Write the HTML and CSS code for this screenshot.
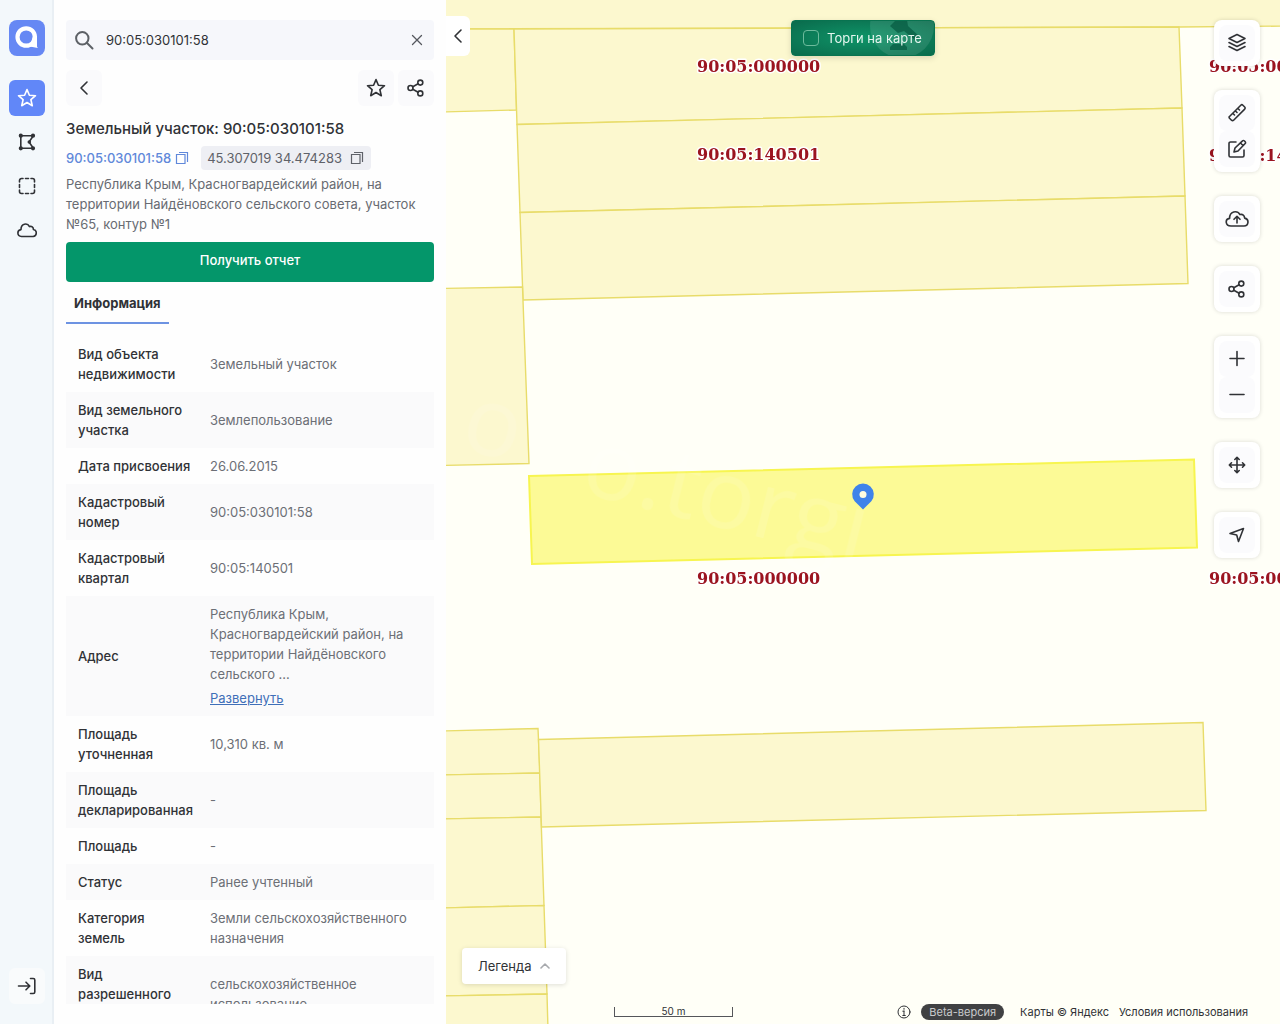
FILE: index.html
```html
<!DOCTYPE html>
<html lang="ru">
<head>
<meta charset="utf-8">
<meta name="viewport" content="width=device-width, initial-scale=1">
<title>Земельный участок: 90:05:030101:58</title>
<link rel="stylesheet" href="styles.css">
</head>
<body>
<svg class="sprite" aria-hidden="true">
  <symbol id="i-star" viewBox="0 0 20 20"><path d="M10 1.600l2.400 5.600 6.100.5-4.600 4 1.400 6L10 14.500l-5.300 3.200 1.400-6-4.600-4 6.100-.5z"/></symbol>
  <symbol id="i-share" viewBox="0 0 20 20"><circle cx="4.500" cy="10" r="2.500"/><circle cx="14.300" cy="4.600" r="2.500"/><circle cx="14.300" cy="15.400" r="2.500"/><path d="M6.800 8.800l5.300-3M6.800 11.200l5.300 3"/></symbol>
  <symbol id="i-back" viewBox="0 0 20 20"><path d="M13 4l-6 6 6 6"/></symbol>
  <symbol id="i-copy" viewBox="0 0 14 14"><path d="M1.500 3.500h8.500v9H1.500zM4 1.500h8.500V11"/></symbol>
</svg>
<div class="app">
  <nav class="rail" aria-label="Разделы">
    <a class="logo" href="#" aria-label="Главная">
      <svg viewBox="0 0 36 36"><circle cx="17.200" cy="17" r="8.700" fill="none" stroke="#fff" stroke-width="4.200"/><path d="M24 16h4v10.500l.8 1.500-8-1.500z" fill="#fff"/></svg>
    </a>
    <button class="tile tile-active" aria-label="Избранное"><svg class="icon"><use href="#i-star"/></svg></button>
    <button class="tile" aria-label="Полигон">
      <svg class="icon" viewBox="0 0 20 20"><path d="M5 3.700h9.500M3.800 5v10M5 16.300h9.500M15.500 5l-3.500 5 3.500 5"/><g fill="currentColor"><circle cx="3.800" cy="3.700" r="1.300"/><circle cx="16" cy="3.700" r="1.300"/><circle cx="12.300" cy="10" r="1"/><circle cx="3.800" cy="16.300" r="1.300"/><circle cx="16" cy="16.300" r="1.300"/></g></svg>
    </button>
    <button class="tile" aria-label="Выделение">
      <svg class="icon" viewBox="0 0 20 20"><path d="M2.500 6V4.500a2 2 0 0 1 2-2H6M8.500 2.500h3M14 2.500h1.500a2 2 0 0 1 2 2V6M17.500 8.500v3M17.500 14v1.500a2 2 0 0 1-2 2H14M11.500 17.500h-3M6 17.500H4.500a2 2 0 0 1-2-2V14M2.500 11.500v-3"/></svg>
    </button>
    <button class="tile" aria-label="Облако">
      <svg class="icon" viewBox="0 0 20 20"><path d="M4.500 16.500C-.3 16.200-.2 10 4 9.600 3.900 3.500 10.300 2.200 12.500 6.600c2-.8 4 .7 3.900 2.900 4.200.8 3.600 6.600-.2 7z"/></svg>
    </button>
    <button class="tile tile-login" aria-label="Войти">
      <svg class="icon" viewBox="0 0 20 20"><path d="M1.500 10h11M9 6.200l3.800 3.800L9 13.800M13.500 2.500h2.800A1.500 1.500 0 0 1 17.800 4v12a1.500 1.500 0 0 1-1.500 1.500h-2.800"/></svg>
    </button>
  </nav>

  <aside class="panel">
    <form class="search">
      <svg class="icon" viewBox="0 0 20 20"><circle cx="8.300" cy="8.300" r="6.200"/><path d="M13 13l5.500 5.500"/></svg>
      <input type="text" value="90:05:030101:58" aria-label="Поиск">
      <button type="button" class="clear" aria-label="Очистить"><svg class="icon" viewBox="0 0 20 20"><path d="M6.500 5.500l9 9M15.500 5.500l-9 9"/></svg></button>
    </form>
    <div class="actions">
      <button class="tile tile-soft" aria-label="Назад"><svg class="icon"><use href="#i-back"/></svg></button>
      <div class="actions-end">
        <button class="tile tile-soft" aria-label="В избранное"><svg class="icon"><use href="#i-star"/></svg></button>
        <button class="tile tile-soft" aria-label="Поделиться"><svg class="icon"><use href="#i-share"/></svg></button>
      </div>
    </div>
    <h1>Земельный участок: 90:05:030101:58</h1>
    <div class="codes">
      <a class="cadastre" href="#">90:05:030101:58 <svg class="copy"><use href="#i-copy"/></svg></a>
      <button class="coords">45.307019 34.474283 <svg class="copy"><use href="#i-copy"/></svg></button>
    </div>
    <p class="address">Республика Крым, Красногвардейский район, на территории Найдёновского сельского совета, участок №65, контур №1</p>
    <button class="report">Получить отчет</button>
    <div class="tabs"><button class="tab">Информация</button></div>
    <div class="scroll">
      <table>
        <tr><th scope="row">Вид объекта недвижимости</th><td>Земельный участок</td></tr>
        <tr><th scope="row">Вид земельного участка</th><td>Землепользование</td></tr>
        <tr><th scope="row">Дата присвоения</th><td>26.06.2015</td></tr>
        <tr><th scope="row">Кадастровый номер</th><td>90:05:030101:58</td></tr>
        <tr><th scope="row">Кадастровый квартал</th><td>90:05:140501</td></tr>
        <tr><th scope="row">Адрес</th><td>Республика Крым, Красногвардейский район, на территории Найдёновского сельского ... <a class="expand" href="#">Развернуть</a></td></tr>
        <tr><th scope="row">Площадь уточненная</th><td>10,310 кв. м</td></tr>
        <tr><th scope="row">Площадь декларированная</th><td>-</td></tr>
        <tr><th scope="row">Площадь</th><td>-</td></tr>
        <tr><th scope="row">Статус</th><td>Ранее учтенный</td></tr>
        <tr><th scope="row">Категория земель</th><td>Земли сельскохозяйственного назначения</td></tr>
        <tr><th scope="row">Вид разрешенного использования</th><td>сельскохозяйственное использование</td></tr>
      </table>
    </div>
  </aside>

  <main class="map">
    <svg class="canvas" viewBox="446 0 834 1024" preserveAspectRatio="xMinYMin slice" role="img" aria-label="Карта участков">
      <g class="parcel">
        <path d="M440-5H1290V26L1179 27 440 29z"/>
        <path d="M440 29L514 29 516.500 110 440 112z"/>
        <path d="M514 29L1179 27 1182 108 517 124.500z"/>
        <path d="M517 124.500L1182 108 1185 196 520 212.500z"/>
        <path d="M520 212.500L1185 196 1188 283.500 523 300z"/>
        <path d="M440 288.500L522.500 287 529 463.500 440 465.500z"/>
        <path d="M440 731L538 728.500 540 773 440 775z"/>
        <path d="M440 775L540 773 541 817 440 819z"/>
        <path d="M440 819L541 817 544 905.500 440 908z"/>
        <path d="M440 908L544 905.500 547 994 440 996z"/>
        <path d="M440 996L547 994 548 1030H440z"/>
        <path d="M538.500 739.500L1203 722.500 1206 810.500 541.500 827z"/>
      </g>
      <path class="parcel-selected" d="M529 476L1194 459.500 1197 547.500 532 564z"/>
      <g class="watermark">
        <text transform="translate(458 448) rotate(14)">o</text>
        <text transform="translate(578 492) rotate(14)">o.torgi</text>
      </g>
      <g class="quarter">
        <text x="697" y="72">90:05:000000</text>
        <text x="697" y="160">90:05:140501</text>
        <text x="697" y="584">90:05:000000</text>
        <text x="1209" y="72">90:05:000000</text>
        <text x="1209" y="161">90:05:140501</text>
        <text x="1209" y="584">90:05:000000</text>
      </g>
      <path d="M863 509.500l-8.300-8.300a10.800 10.800 0 1 1 16.600 0z" fill="#3f83ea"/><circle cx="863" cy="494.500" r="3.500" fill="#fffde0"/>
    </svg>

    <button class="collapse" aria-label="Свернуть панель"><svg class="icon"><use href="#i-back"/></svg></button>

    <label class="trades"><svg class="gavel" viewBox="0 0 64 36" aria-hidden="true"><circle cx="32" cy="5" r="32" fill="#fff" opacity=".1"/><path d="M20 5l6-6h11l1 6 11 10-4 4-11-9-6 2zM20 29v-3l3-3h11l3 3v3z" fill="#075c43" opacity=".75"/></svg><input type="checkbox"><span>Торги на карте</span></label>

    <div class="tools">
      <div class="group"><button aria-label="Слои"><svg class="icon" viewBox="0 0 20 20"><path d="M10 1.500l8 4-8 4-8-4zM2 9.500l8 4 8-4M2 13.500l8 4 8-4"/></svg></button></div>
      <div class="group">
        <button aria-label="Линейка"><svg class="icon" viewBox="0 0 20 20"><path d="M2 14L13.800 2.200a1.500 1.500 0 0 1 2.100 0L17.700 4a1.500 1.500 0 0 1 0 2.100L6.600 17.200a1.500 1.500 0 0 1-2.100 0L2.300 15a1 1 0 0 1 0-1M6 10.500L7.500 12M8.500 8L10 9.500M11 5.500L12.500 7"/></svg></button>
        <button aria-label="Редактировать"><svg class="icon" viewBox="0 0 20 20"><path d="M9 3H3.500A1.500 1.500 0 0 0 2 4.500v12A1.500 1.500 0 0 0 3.500 18h12a1.500 1.500 0 0 0 1.500-1.500V11M7 13l1-4 7.500-7.200a1.200 1.200 0 0 1 1.700 0l1 1a1.200 1.200 0 0 1 0 1.700L11 12zM13.500 4l2.500 2.500"/></svg></button>
      </div>
      <div class="group"><button aria-label="Загрузить"><svg class="icon wide" viewBox="0 0 24 20"><path d="M6 17C0 16.800-.2 10 4.600 9.400 4.500 2.300 12 .8 15 5.600c2.500-.8 4.700.8 4.600 3.500C24.500 10 23.800 16.800 19 17zM12 14V7.500M9 10.300l3-3 3 3"/></svg></button></div>
      <div class="group"><button aria-label="Поделиться картой"><svg class="icon"><use href="#i-share"/></svg></button></div>
      <div class="group">
        <button aria-label="Приблизить"><svg class="icon" viewBox="0 0 20 20"><path d="M10 2.500v14M3 9.500h14"/></svg></button>
        <button aria-label="Отдалить"><svg class="icon" viewBox="0 0 20 20"><path d="M3 9.500h14"/></svg></button>
      </div>
      <div class="group"><button aria-label="Переместить"><svg class="icon" viewBox="0 0 20 20"><path d="M10 2.500v15M2.500 10h15M7.800 4.500L10 2.300l2.200 2.200M7.800 15.500l2.200 2.200 2.200-2.200M4.500 7.800L2.300 10l2.200 2.200M15.500 7.800l2.200 2.200-2.200 2.200"/></svg></button></div>
      <div class="group"><button aria-label="Моё местоположение"><svg class="icon" viewBox="0 0 20 20"><path d="M3 8.500l13.500-5-5 13-1.800-6.500z"/></svg></button></div>
    </div>

    <button class="legend">Легенда <svg class="icon" viewBox="0 0 10 10"><path d="M1 7l4-4 4 4"/></svg></button>
    <div class="scale">50 m</div>
    <footer class="credits">
      <svg class="icon" viewBox="0 0 14 14"><circle cx="7" cy="7" r="6"/><path d="M7 6v4.500M5.800 6.200H7M5.800 10.500h2.500M7 3.300v1"/></svg>
      <span class="beta">Beta-версия</span>
      <a href="#">Карты © Яндекс</a>
      <a href="#">Условия использования</a>
    </footer>
  </main>
</div>
</body>
</html>
```
FILE: styles.css
```css
* { box-sizing: border-box; }
body {
  margin: 0;
  font: 13px/20px Inter, "Open Sans", sans-serif;
  color: #303236;
}
button, input { font: inherit; color: inherit; }
button { border: 0; padding: 0; background: none; cursor: pointer; }
a { color: inherit; text-decoration: none; }
.sprite { position: absolute; width: 0; height: 0; }
.icon {
  width: 20px; height: 20px; flex: none;
  fill: none; stroke: currentColor; stroke-width: 1.6;
  stroke-linecap: round; stroke-linejoin: round;
}
.app { display: flex; height: 100vh; overflow: hidden; }

.rail {
  flex: none; width: 54px; padding: 20px 0;
  display: flex; flex-direction: column; align-items: center; gap: 8px;
  background: #f3f8fb; box-shadow: inset -2px 0 #e9eff4;
}
.logo { width: 36px; height: 36px; margin-bottom: 16px; border-radius: 8px; background: #6688f4; }
.logo svg { display: block; }
.tile {
  display: flex; align-items: center; justify-content: center;
  width: 36px; height: 36px; border-radius: 6px;
}
.tile-active { background: #6187f8; color: #fff; }
.tile-soft { background: #fafafc; }
.tile-login { margin-top: auto; background: #f9fbfc; }

.panel {
  flex: none; width: 392px; padding: 20px 12px;
  display: flex; flex-direction: column;
  background: #fefefe;
}
.search {
  display: flex; align-items: center; gap: 12px; height: 40px; padding: 0 8px;
  background: #f6f7fb; border-radius: 4px; flex: none;
}
.search > .icon { color: #5d6166; stroke-width: 2; }
.search input { flex: 1; min-width: 0; border: 0; padding: 0; background: none; outline: 0; }
.clear { display: flex; color: #55585e; }
.clear .icon { stroke-width: 1.3; }
.actions { display: flex; justify-content: space-between; margin-top: 10px; }
.actions-end { display: flex; gap: 4px; }
h1 { margin: 11px 0 5px; font-size: 15px; line-height: 24px; font-weight: 500; }
.codes { display: flex; align-items: center; gap: 12px; margin-bottom: 4px; }
.copy { width: 14px; height: 14px; fill: none; stroke: currentColor; stroke-width: 1.2; flex: none; }
.cadastre { display: flex; align-items: center; gap: 4px; color: #6088da; font-weight: 500; }
.coords {
  display: flex; align-items: center; gap: 8px; height: 24px; padding: 0 7px 0 6px;
  border-radius: 4px; background: #eeeff4; color: #5f6269;
}
.address { margin: 0 0 8px; color: #686b72; }
.report { flex: none; height: 40px; padding-bottom: 4px; border-radius: 4px; background: #04966a; color: #fff; font-weight: 500; }
.tabs { display: flex; margin: 2px 0 12px; }
.tab { height: 40px; padding: 0 8px; border-bottom: 2px solid #6d93e2; font-weight: 700; }
.scroll { flex: 1; min-height: 0; overflow: hidden; }
table { width: 100%; border-collapse: collapse; table-layout: fixed; }
th, td { padding: 8px 12px; text-align: left; vertical-align: middle; }
th { width: 132px; padding-right: 4px; font-weight: 500; }
td { color: #6c6f76; }
tr:nth-child(even) { background: #fafafb; }
.expand { display: block; margin-top: 4px; color: #3f6fb8; text-decoration: underline; }

.map { position: relative; flex: 1; min-width: 0; background: #fffff7; }
.canvas { display: block; width: 100%; height: 100%; }
.parcel { fill: #fcf8cf; stroke: #e8dc6a; stroke-width: 1.4; }
.parcel-selected { fill: #fcfa96; stroke: #f7f550; stroke-width: 2; }
.watermark { font: 96px "Open Sans", sans-serif; fill: #fff; opacity: .12; }
.quarter {
  font: bold 16px "DejaVu Serif", serif; fill: #9b1420;
  stroke: #fff; stroke-width: 3; stroke-linejoin: round; paint-order: stroke;
}
.collapse {
  position: absolute; left: 0; top: 16px; width: 24px; height: 40px;
  display: flex; align-items: center; justify-content: center;
  background: #fff; border-radius: 0 6px 6px 0;
}
.trades {
  position: absolute; top: 20px; left: 50%; transform: translateX(-50%);
  display: flex; align-items: center; gap: 8px; width: 144px; height: 36px; padding: 0 11px;
  overflow: hidden; white-space: nowrap; color: #e5f6ef;
  border-radius: 4px; border: 1px solid #087350;
  background: radial-gradient(#0f9468, #0a6b4c);
  box-shadow: 0 2px 6px #00000022;
}
.gavel { position: absolute; right: 0; top: 0; width: 64px; height: 36px; }
.trades input {
  appearance: none; flex: none; width: 16px; height: 16px; margin: 0;
  border: 1px solid #6dbb9c; border-radius: 4px;
}
.trades span { position: relative; }
.tools { position: absolute; top: 20px; right: 20px; display: flex; flex-direction: column; gap: 24px; }
.group { padding: 5px; background: #fff; border-radius: 8px; box-shadow: 0 0 4px #00000026; }
.group button {
  display: flex; align-items: center; justify-content: center;
  width: 36px; height: 36px; border-radius: 8px; background: #fbfbfd;
}
.group .wide { width: 24px; }
.legend {
  position: absolute; left: 16px; bottom: 40px; height: 36px; padding: 0 16px;
  display: flex; align-items: center; gap: 8px;
  background: #fff; border-radius: 4px; box-shadow: 0 1px 5px #00000022;
}
.legend .icon { width: 10px; height: 10px; color: #a7a9ad; }
.scale {
  position: absolute; left: 168px; bottom: 7px; width: 119px; height: 10px;
  border: 1px solid #55565a; border-top: 0;
  text-align: center; font-size: 10px; line-height: 8px;
}
.credits {
  position: absolute; right: 32px; bottom: 4px;
  display: flex; align-items: center; gap: 10px; font-size: 11px; line-height: 16px; white-space: nowrap;
}
.credits .icon { width: 14px; height: 14px; stroke-width: 1; }
.beta { padding: 0 8px; margin-right: 6px; border-radius: 8px; background: #404143; color: #c9cacc; }
```
